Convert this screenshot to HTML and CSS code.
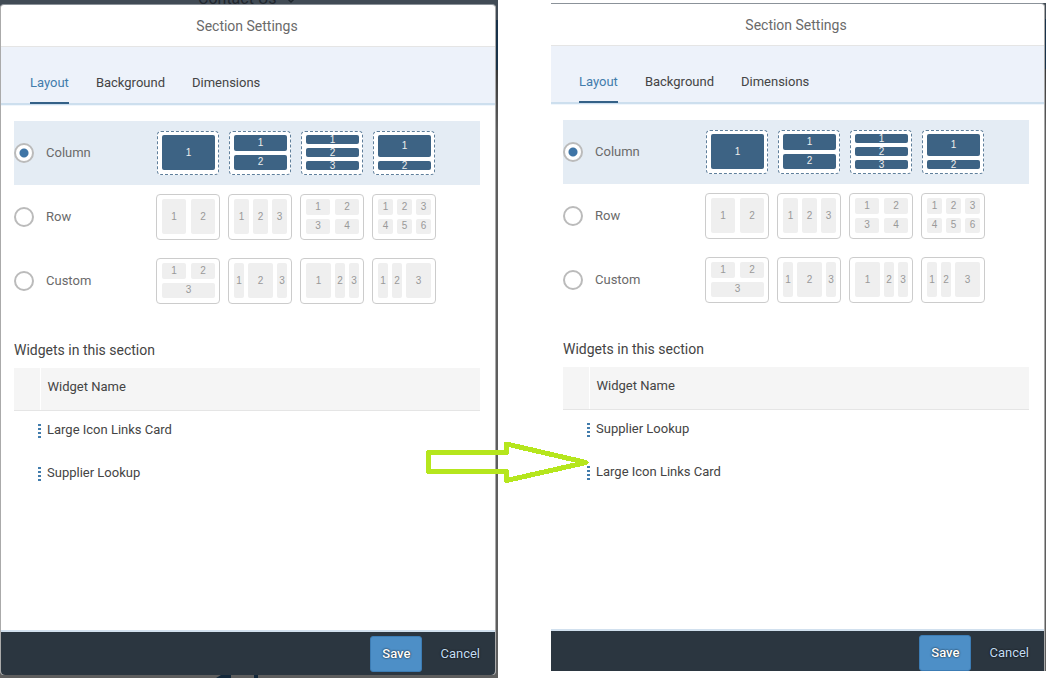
FILE: index.html
```html
<!DOCTYPE html>
<html lang="en">
<head>
<meta charset="utf-8">
<title>Section Settings</title>
<link rel="stylesheet" href="styles.css">
</head>
<body>
<main class="compare">
  <section class="shot shot-before">
    <div class="page-behind">Contact Us
      <svg width="12" height="8" viewBox="0 0 12 8"><path d="M1 1l5 5 5-5" fill="none" stroke="#1f262d" stroke-width="1.5"/></svg>
    </div>
    <svg class="page-below" width="44" height="3" viewBox="0 0 44 3"><path d="M0 3L5 0H15V3ZM38 0h4v3h-4z" fill="#14283a"/></svg>
    <div class="dialog">
      <header class="dialog-header"><h1>Section Settings</h1></header>
      <nav class="tabs">
        <button class="tab tab-active">Layout</button>
        <button class="tab">Background</button>
        <button class="tab">Dimensions</button>
      </nav>
      <div class="content">
        <div class="option option-selected">
          <label class="choice"><input type="radio" name="layout-a" checked>Column</label>
          <div class="tiles">
            <div class="tile"><i>1</i></div>
            <div class="tile"><i>1</i><i>2</i></div>
            <div class="tile"><i>1</i><i>2</i><i>3</i></div>
            <div class="tile tall-first"><i>1</i><i>2</i></div>
          </div>
        </div>
        <div class="option">
          <label class="choice"><input type="radio" name="layout-a">Row</label>
          <div class="tiles">
            <div class="tile cols-2"><i>1</i><i>2</i></div>
            <div class="tile cols-3"><i>1</i><i>2</i><i>3</i></div>
            <div class="tile cols-2"><i>1</i><i>2</i><i>3</i><i>4</i></div>
            <div class="tile cols-3"><i>1</i><i>2</i><i>3</i><i>4</i><i>5</i><i>6</i></div>
          </div>
        </div>
        <div class="option">
          <label class="choice"><input type="radio" name="layout-a">Custom</label>
          <div class="tiles">
            <div class="tile cols-2"><i>1</i><i>2</i><i class="wide">3</i></div>
            <div class="tile center-wide"><i>1</i><i>2</i><i>3</i></div>
            <div class="tile left-wide"><i>1</i><i>2</i><i>3</i></div>
            <div class="tile right-wide"><i>1</i><i>2</i><i>3</i></div>
          </div>
        </div>
        <h2>Widgets in this section</h2>
        <table class="widgets">
          <thead><tr><th class="grip-cell"></th><th>Widget Name</th></tr></thead>
          <tbody>
            <tr><td class="grip-cell"><span class="grip"></span></td><td>Large Icon Links Card</td></tr>
            <tr><td class="grip-cell"><span class="grip"></span></td><td>Supplier Lookup</td></tr>
          </tbody>
        </table>
      </div>
      <footer class="dialog-footer">
        <button class="btn btn-save">Save</button>
        <button class="btn">Cancel</button>
      </footer>
    </div>
  </section>

  <section class="shot shot-after">
    <div class="dialog">
      <header class="dialog-header"><h1>Section Settings</h1></header>
      <nav class="tabs">
        <button class="tab tab-active">Layout</button>
        <button class="tab">Background</button>
        <button class="tab">Dimensions</button>
      </nav>
      <div class="content">
        <div class="option option-selected">
          <label class="choice"><input type="radio" name="layout-b" checked>Column</label>
          <div class="tiles">
            <div class="tile"><i>1</i></div>
            <div class="tile"><i>1</i><i>2</i></div>
            <div class="tile"><i>1</i><i>2</i><i>3</i></div>
            <div class="tile tall-first"><i>1</i><i>2</i></div>
          </div>
        </div>
        <div class="option">
          <label class="choice"><input type="radio" name="layout-b">Row</label>
          <div class="tiles">
            <div class="tile cols-2"><i>1</i><i>2</i></div>
            <div class="tile cols-3"><i>1</i><i>2</i><i>3</i></div>
            <div class="tile cols-2"><i>1</i><i>2</i><i>3</i><i>4</i></div>
            <div class="tile cols-3"><i>1</i><i>2</i><i>3</i><i>4</i><i>5</i><i>6</i></div>
          </div>
        </div>
        <div class="option">
          <label class="choice"><input type="radio" name="layout-b">Custom</label>
          <div class="tiles">
            <div class="tile cols-2"><i>1</i><i>2</i><i class="wide">3</i></div>
            <div class="tile center-wide"><i>1</i><i>2</i><i>3</i></div>
            <div class="tile left-wide"><i>1</i><i>2</i><i>3</i></div>
            <div class="tile right-wide"><i>1</i><i>2</i><i>3</i></div>
          </div>
        </div>
        <h2>Widgets in this section</h2>
        <table class="widgets">
          <thead><tr><th class="grip-cell"></th><th>Widget Name</th></tr></thead>
          <tbody>
            <tr><td class="grip-cell"><span class="grip"></span></td><td>Supplier Lookup</td></tr>
            <tr><td class="grip-cell"><span class="grip"></span></td><td>Large Icon Links Card</td></tr>
          </tbody>
        </table>
      </div>
      <footer class="dialog-footer">
        <button class="btn btn-save">Save</button>
        <button class="btn">Cancel</button>
      </footer>
    </div>
  </section>

  <svg class="arrow" width="166" height="46" viewBox="0 0 166 46" shape-rendering="crispEdges">
    <path d="M4.500 14.500H82.500V6L162 24.500L82.500 42.500V33.500H4.500Z" fill="none" stroke="#b5e61d" stroke-width="5" stroke-linejoin="round"/>
  </svg>
</main>
</body>
</html>
```

FILE: styles.css
```css
* { box-sizing: border-box; }

body {
  margin: 0;
  background: #fff;
  color: #444;
  font: 13px/20px Roboto, "Liberation Sans", sans-serif;
}

button { font: inherit; border: 0; background: none; padding: 0; cursor: pointer; }

.compare {
  position: relative;
  display: grid;
  grid-template-columns: 498fr 495fr;
  gap: 53px;
  min-height: 100vh;
  padding-right: 3px;
}

.shot { position: relative; display: flex; overflow: hidden; }

.shot-before {
  padding: 4px 2px 3px 0;
  background: linear-gradient(#414b55 20px, #18324a 20px 70px, #383838 70px, #5e5e5e 130px);
}

.shot-after {
  margin: 3px 0 7px;
  padding-right: 1px;
  background: linear-gradient(#414b55 16px, #18324a 16px 66px, #383838 66px, #5e5e5e 126px);
}

.page-behind {
  position: absolute;
  top: -11px;
  left: 198px;
  color: #1f262d;
  font-size: 16px;
}

.page-behind svg { margin-left: 4px; }

.page-below { position: absolute; left: 216px; bottom: 0; }

.dialog {
  position: relative;
  flex: 1;
  display: flex;
  flex-direction: column;
  background: #fff;
  border: 1px solid #aaa;
  border-top-color: #8b9299;
  border-bottom: 0;
  border-radius: 4px;
}

.shot-after .dialog { border-left: 0; border-radius: 0 4px 0 0; }

.dialog-header {
  height: 42px;
  display: flex;
  align-items: center;
  justify-content: center;
  border-bottom: 1px solid #e5e5e5;
}

.shot-before .dialog-header { padding-right: 2px; }
.shot-after .dialog-header { padding-right: 3px; }

h1, h2 { margin: 0; font-size: 14px; line-height: 20px; font-weight: 400; }
h1 { color: #6a6a6a; }

.tabs {
  display: flex;
  gap: 27px;
  height: 59px;
  padding: 26px 29px 0;
  background: #edf2fa;
  border-bottom: 1px solid #f0f6fc;
  box-shadow: inset 0 -2px #cddfee;
}

.shot-after .tabs, .shot-after .content { margin-left: -1px; }

.tab { height: 31px; padding-bottom: 11px; color: #444; }
.tab-active { color: #427cac; border-bottom: 2px solid #346187; padding-bottom: 9px; }

.content { flex: 1; padding: 15px 15px 0 13px; }

.option { display: flex; align-items: center; height: 64px; }
.option-selected { background: #e4ecf4; }

.choice {
  display: flex;
  align-items: center;
  gap: 12px;
  width: 142px;
  color: #6a6a6a;
}

.choice input {
  appearance: none;
  width: 20px;
  height: 20px;
  margin: 0;
  border: 2px solid #bbb;
  border-radius: 50%;
  background: #fff;
}

.choice input:checked { background: radial-gradient(circle, #3f75a6 4px, #fff 5px); }

.tiles { display: flex; gap: 8px; }

.tile {
  display: grid;
  grid-auto-rows: 1fr;
  gap: 4px;
  width: 64px;
  height: 46px;
  padding: 4px 4px 5px 5px;
  background: #fff;
  border: 1px solid #ccc;
  border-radius: 4px;
}

.tile i {
  display: flex;
  align-items: center;
  justify-content: center;
  min-height: 0;
  background: #efefef;
  border-radius: 2px;
  color: #999;
  font: 10px/10px "Liberation Sans", sans-serif;
}

.option-selected .tile {
  width: 62px;
  height: 44px;
  margin: 1px;
  padding: 3px 3px 4px 4px;
  border: 1px dashed #5f7f9b;
}

.option-selected .tile i { background: #3d6384; color: #eee; }

.option-selected .tall-first { grid-template-rows: 22px 9px; }
.cols-2 { grid-template-columns: 1fr 1fr; column-gap: 5px; }
.cols-3 { grid-template-columns: 1fr 1fr 1fr; }
.center-wide { grid-template-columns: 10px 25px 10px; }
.left-wide { grid-template-columns: 25px 10px 10px; }
.right-wide { grid-template-columns: 10px 10px 25px; }
.wide { grid-column: span 2; }

h2 { margin: 27px 0 8px; }

.widgets { width: 100%; border-collapse: collapse; table-layout: fixed; }
.widgets th, .widgets td { height: 43px; padding: 0 0 4px 7px; text-align: left; font-weight: 400; }
.widgets th { height: 42px; background: #f5f5f5; border-bottom: 1px solid #e5e5e5; }
.widgets .grip-cell { width: 26px; padding: 0 0 2px 24px; }
.widgets th.grip-cell { border-right: 1px solid #fff; }

.grip {
  display: block;
  width: 3px;
  height: 14px;
  background: repeating-linear-gradient(#427cac 0 2px, transparent 2px 4px);
}

.dialog-footer {
  display: flex;
  justify-content: flex-end;
  gap: 2px;
  padding: 4px 0 3px;
  background: #2b3640;
  border-top: 2px solid #d1e0ee;
  border-radius: 0 0 4px 4px;
}

.shot-after .dialog-footer { padding-bottom: 0; border-radius: 0; }

.btn {
  height: 36px;
  padding: 0 15px 0 16px;
  color: #c3dcf2;
  text-shadow: 0 0 2px #000;
}

.btn-save {
  padding: 0 11px;
  background: #4d8fc7;
  border: 1px solid #3c7cb4;
  border-radius: 3px;
  color: #fff;
  font-weight: 500;
}

.arrow { position: absolute; left: calc(41% - 6px); top: 438px; }
```
